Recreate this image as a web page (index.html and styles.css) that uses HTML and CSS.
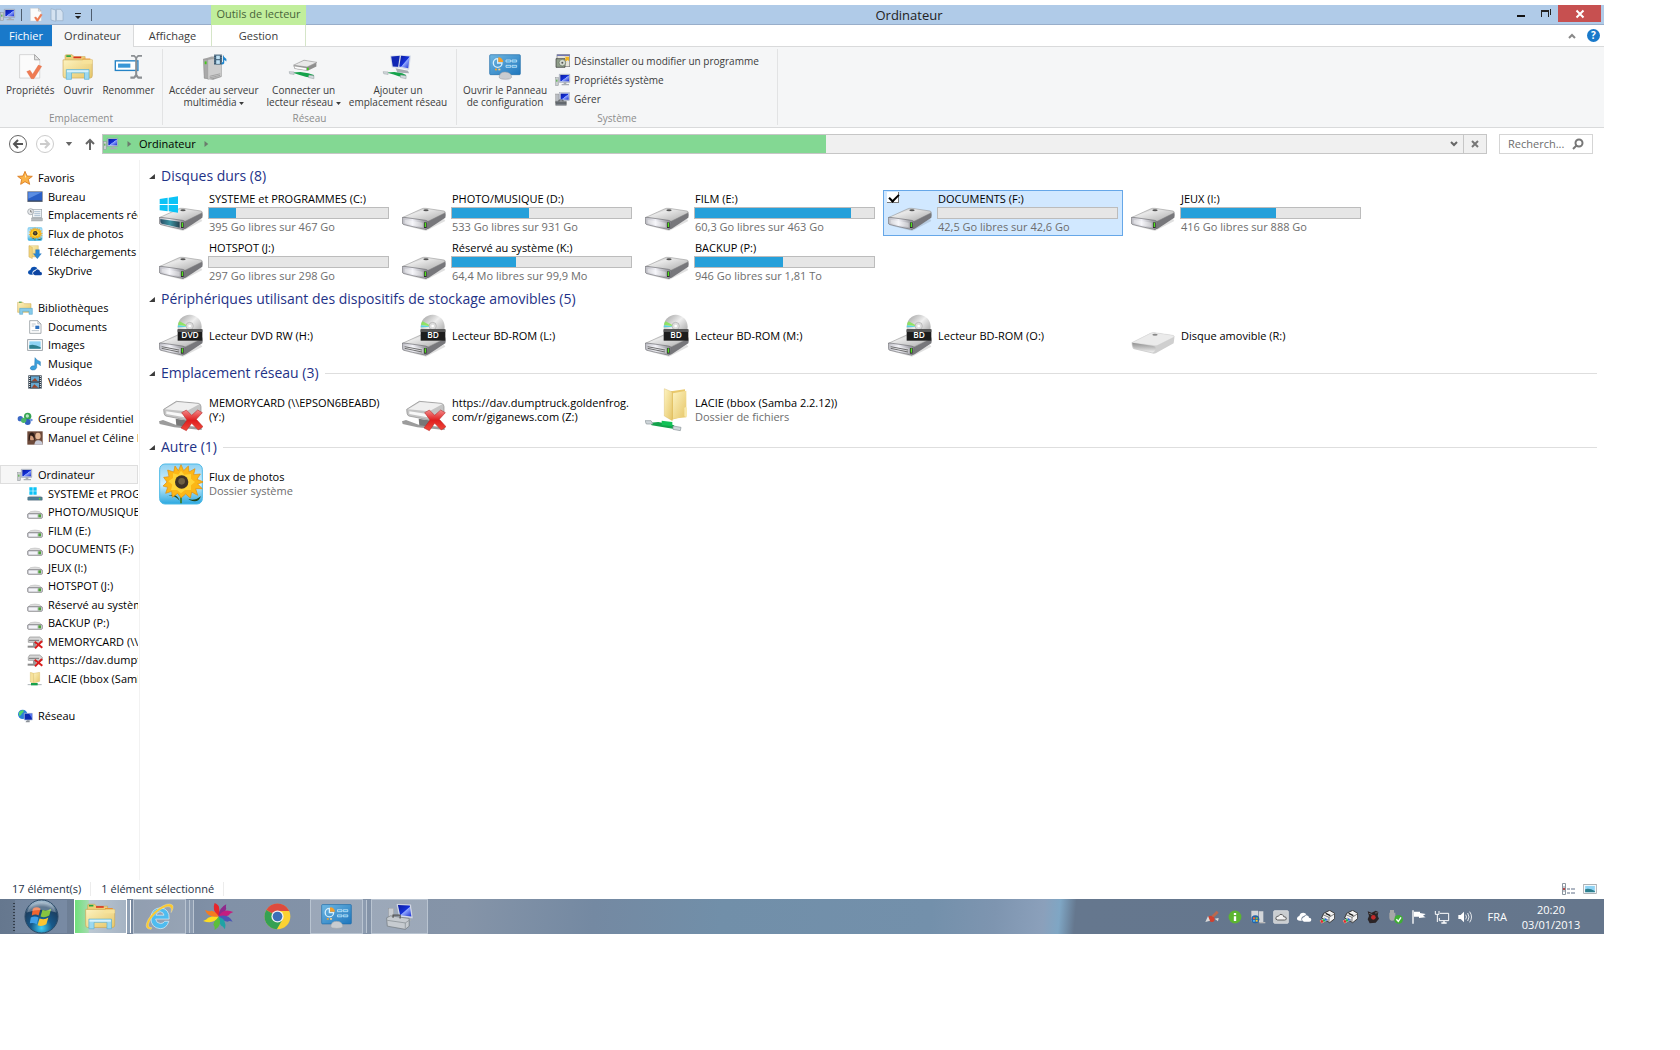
FILE: index.html
```html
<!DOCTYPE html>
<html lang="fr">

<head>
    <meta charset="utf-8">
    <title>Ordinateur</title>
    <link rel="stylesheet" href="styles.css">
</head>

<body>
    <!-- shared icons -->
    <svg class="defs" aria-hidden="true">
        <defs>
            <linearGradient id="gTop" x1="0" y1="0" x2="1" y2="1">
                <stop offset="0" stop-color="#9c9c9c" />
                <stop offset=".35" stop-color="#e9e9e9" />
                <stop offset="1" stop-color="#a9a9a9" />
            </linearGradient>
            <linearGradient id="gFront" x1="0" y1="0" x2="1" y2="0">
                <stop offset="0" stop-color="#b9b9c0" />
                <stop offset=".4" stop-color="#f1f1f7" />
                <stop offset="1" stop-color="#85858b" />
            </linearGradient>
            <linearGradient id="gTeal" x1="0" y1="0" x2="1" y2="0">
                <stop offset="0" stop-color="#2b4f66" />
                <stop offset=".5" stop-color="#3b94a3" />
                <stop offset="1" stop-color="#27424f" />
            </linearGradient>
            <linearGradient id="gFade" x1="0" y1="0" x2="0" y2="1">
                <stop offset="0" stop-color="#8f8f8f" />
                <stop offset="1" stop-color="#efefef" />
            </linearGradient>
            <linearGradient id="gDisc" x1="0" y1="0" x2="1" y2="1">
                <stop offset="0" stop-color="#999" />
                <stop offset=".45" stop-color="#eee" />
                <stop offset="1" stop-color="#8d8d8d" />
            </linearGradient>
            <linearGradient id="gFolder" x1="0" y1="0" x2="1" y2="1">
                <stop offset="0" stop-color="#fdf3c0" />
                <stop offset="1" stop-color="#e6c668" />
            </linearGradient>
            <linearGradient id="gScreen" x1="0" y1="0" x2="1" y2="1">
                <stop offset="0" stop-color="#0a1a9c" />
                <stop offset=".5" stop-color="#1430d8" />
                <stop offset=".55" stop-color="#8fa6ff" />
                <stop offset="1" stop-color="#1a2ed0" />
            </linearGradient>
            <linearGradient id="gPanel" x1="0" y1="0" x2="1" y2="1">
                <stop offset="0" stop-color="#6fb7e2" />
                <stop offset="1" stop-color="#1e76bd" />
            </linearGradient>
            <linearGradient id="gSky" x1="0" y1="0" x2="0" y2="1">
                <stop offset="0" stop-color="#8fd2f3" />
                <stop offset=".5" stop-color="#d3f0fb" />
                <stop offset="1" stop-color="#2ba8e0" />
            </linearGradient>
            <linearGradient id="gCross" x1="0" y1="0" x2="0" y2="1">
                <stop offset="0" stop-color="#f28a8a" />
                <stop offset=".5" stop-color="#e01e1e" />
                <stop offset="1" stop-color="#f04b3c" />
            </linearGradient>
            <radialGradient id="gOrb" cx=".5" cy=".85" r=".8">
                <stop offset="0" stop-color="#3fd0f5" />
                <stop offset=".4" stop-color="#17598a" />
                <stop offset=".8" stop-color="#1c3e60" />
                <stop offset="1" stop-color="#9fb8cc" />
            </radialGradient>
        </defs>

        <symbol id="drive" viewBox="0 0 132 132">
            <path d="M10 104L72 120L130 90L126 84L70 112Z" fill="#000" opacity=".12" />
            <path d="M78 88L130 64Q132 72 130 80L80 113L70 116Z" fill="#77777b" />
            <path d="M1 80L58 54Q64 51 72 52L126 60Q132 62 128 66L80 90Q76 92 70 91L6 82Z" fill="url(#gTop)" stroke="#888" stroke-width="1.5" />
            <path d="M1 82Q0 78 6 79L70 88Q78 89 78 94L76 112Q74 117 68 115L6 101Q2 100 1 96Z" fill="url(#gFront)" stroke="#6e6e72" stroke-width="2" />
            <path d="M8 86L62 95V109L8 97Z" fill="#fff" opacity=".35" />
            <rect x="66" y="94" width="8" height="17" fill="#2e2e2e" />
            <rect x="68" y="95" width="4" height="13" fill="#4fe01c" />
            <ellipse cx="72" cy="58" rx="8" ry="3" fill="#555" />
        </symbol>
        <symbol id="drive-win" viewBox="0 0 132 132">
            <use href="#drive" width="132" height="132" />
            <path d="M4 84L62 92V110L8 98Q3 96 4 84Z" fill="url(#gTeal)" />
            <path d="M2 24L26 20V39H2ZM29 20L57 16V39H29ZM2 42H26V61L2 58ZM29 42H57V65L29 61Z" fill="#0cc3f6" />
        </symbol>
        <symbol id="drive-disc" viewBox="0 0 132 132">
            <use href="#drive" y="8" width="132" height="132" />
            <path d="M8 98L60 108M8 103L60 114" stroke="#555" stroke-width="2.5" fill="none" />
            <circle cx="92" cy="38" r="36" fill="url(#gDisc)" />
            <path d="M92 38L57 32Q58 26 62 22Z" fill="#7fe84a" opacity=".8" />
            <path d="M92 38L57 34L56 40Z" fill="#39d6e0" opacity=".8" />
            <circle cx="92" cy="36" r="11" fill="#ddd" stroke="#aaa" stroke-width="2" />
            <circle cx="92" cy="36" r="4" fill="#fff" />
            <rect x="56" y="46" width="74" height="34" fill="#1d1d1d" />
            <rect x="56" y="46" width="74" height="8" fill="#555" />
        </symbol>
        <symbol id="drive-usb" viewBox="0 0 132 132">
            <path d="M2 86L58 58Q64 55 72 56L126 64Q132 66 130 72L128 88L74 118Q68 120 62 118L10 106Q2 104 2 86Z" fill="#cfcfcf" />
            <path d="M2 86L58 58Q64 55 72 56L126 64Q132 66 128 70L80 94Q76 96 70 95Z" fill="#ebebeb" stroke="#c4c4c4" stroke-width="1" />
            <path d="M4 86L66 96Q78 98 72 110Q68 118 58 114L12 104Q4 100 4 86Z" fill="url(#gFade)" />
            <ellipse cx="72" cy="62" rx="8" ry="3" fill="#888" />
        </symbol>
        <symbol id="drive-off" viewBox="0 0 132 132">
            <path d="M0 100L12 96L50 110L128 118V126L46 118L2 108Z" fill="#9c9c9c" />
            <path d="M14 64L52 40L118 46Q126 48 126 56V76L82 96L20 84Q14 82 14 64Z" fill="#c4c4c4" stroke="#8d8d8d" stroke-width="2" />
            <path d="M18 64L54 42L122 48L82 70Z" fill="#efefef" />
            <path d="M22 70L76 78V88L22 78Z" fill="#f8f8f8" />
            <path d="M50 92L90 98L82 116L52 112Z" fill="#777" />
            <path d="M68 74L82 66L98 82L116 66L130 74L112 94L132 116L118 126L98 106L82 128L66 120L84 96Z" fill="url(#gCross)" stroke="#b32020" stroke-width="1.5" />
        </symbol>
        <symbol id="net-folder" viewBox="0 0 132 132">
            <path d="M78 10L120 4V84L78 96Z" fill="#e9c96c" />
            <path d="M58 2L82 12V98L58 84Z" fill="url(#gFolder)" stroke="#d2ae50" stroke-width="1" />
            <path d="M84 16L124 8V88L84 92Z" fill="url(#gFolder)" />
            <rect x="118" y="58" width="8" height="28" rx="3" fill="#f8e9ab" />
            <path d="M16 104L40 102L60 106L88 112L84 122L56 118L20 112Z" fill="#13a24b" />
            <path d="M50 98L82 102V114L50 112Z" fill="#12c257" />
            <path d="M0 98L18 98L24 108L4 108ZM84 114L108 118L106 128L84 124Z" fill="#cfd6da" stroke="#8a9499" stroke-width="2" />
        </symbol>
        <symbol id="sunflower" viewBox="0 0 132 124">
            <rect x="2" y="2" width="128" height="120" rx="16" fill="url(#gSky)" stroke="#4db9e6" stroke-width="3" />
            <path d="M66 76V120" stroke="#3f7a17" stroke-width="5" />
            <path d="M62 112Q50 84 22 100Q40 90 62 112ZM76 100Q100 120 126 98Q118 122 92 110Z" fill="#22461a" />
            <path d="M66 4L74 22L88 8L90 26L108 16L104 34L124 32L114 48L134 56L116 62L130 76L110 76L116 96L98 86L94 104L80 92L66 104L56 90L40 102L38 84L20 90L26 72L12 68L24 56L14 42L30 40L26 20L44 26L48 8L58 22Z" fill="#fcb716" stroke="#e18a0b" stroke-width="2" />
            <path d="M66 22L76 34L96 32L96 46L108 56L96 66L96 80L78 80L66 90L54 80L36 80L40 64L28 54L42 44L42 30L58 34Z" fill="#ffd437" />
            <circle cx="68" cy="56" r="20" fill="#3d3226" />
            <circle cx="68" cy="54" r="10" fill="#6d6044" />
        </symbol>

        <symbol id="computer" viewBox="0 0 48 42">
            <rect x="2" y="14" width="8" height="24" fill="#c8cccf" stroke="#8e9498" stroke-width="1.5" />
            <rect x="4" y="20" width="3" height="6" fill="#3fae2a" />
            <path d="M13 4H44V28H13Z" fill="#cfd6e6" stroke="#7d8799" stroke-width="1.5" />
            <path d="M16 6H42V25H16Z" fill="url(#gScreen)" />
            <path d="M26 28H34V33H42V37H20V33H26Z" fill="#a8adb3" />
        </symbol>
        <symbol id="doc-check" viewBox="0 0 72 80">
            <path d="M4 2H50L66 18V74H4Z" fill="#fbfbfb" stroke="#c4c4c4" stroke-width="2" />
            <path d="M50 2V18H66Z" fill="#e6e6e6" stroke="#888" stroke-width="2" />
            <path d="M26 54L36 50L44 62L62 34L72 38L48 76L40 76Z" fill="#ef7b52" stroke="#d9623b" stroke-width="1" />
        </symbol>
        <symbol id="folders" viewBox="0 0 96 80">
            <path d="M8 6Q8 2 12 2H30L36 8H70V20H8Z" fill="#efcf79" stroke="#c39f48" stroke-width="1.5" />
            <rect x="12" y="4" width="14" height="5" fill="#21a540" />
            <rect x="34" y="8" width="24" height="5" fill="#d8321f" />
            <rect x="62" y="14" width="24" height="5" fill="#f08c28" />
            <path d="M2 18H92V66Q92 74 86 74H8Q2 74 2 66Z" fill="url(#gFolder)" stroke="#cba653" stroke-width="2" />
            <path d="M58 26L64 18H92V30H58Z" fill="#f7e39b" />
            <path d="M12 48H82V78H68V58H28V78H12Z" fill="#9bd8f0" stroke="#58aed2" stroke-width="2" />
            <path d="M14 50H80V56H14Z" fill="#d7f2fc" />
        </symbol>
        <symbol id="rename" viewBox="0 0 84 76">
            <rect x="2" y="20" width="66" height="28" fill="#fff" stroke="#2583c6" stroke-width="4" />
            <rect x="10" y="28" width="36" height="12" fill="#3795d6" />
            <path d="M48 3H58L63 8L68 3H80V8H70L66 12V60L70 66H80V72H68L63 67L58 72H46V66H56L60 60V12L56 8H48Z" fill="#8b8f93" />
        </symbol>
        <symbol id="server" viewBox="0 0 84 84">
            <path d="M8 16L34 8L66 8V74L42 82L10 78Z" fill="#a7a7a7" />
            <path d="M8 16L40 18V82L10 78Z" fill="#a9a9a9" stroke="#777" />
            <path d="M22 18L66 12V72L22 82Z" fill="#cdcdcd" stroke="#8a8a8a" />
            <path d="M28 72L62 64M28 77L62 69" stroke="#888" stroke-width="2" />
            <rect x="12" y="24" width="6" height="9" fill="#43c918" />
            <rect x="42" y="2" width="26" height="32" fill="#2b4c66" />
            <rect x="49" y="5" width="12" height="12" fill="#bfe1f4" />
            <rect x="49" y="20" width="12" height="12" fill="#bfe1f4" />
            <path d="M45 3V34M65 3V34" stroke="#fff" stroke-width="2" stroke-dasharray="3 3" />
            <path d="M72 4Q74 12 82 16V24Q78 20 75 19V30Q72 36 66 32Q66 26 71 26V4Z" fill="#1e86cf" />
        </symbol>
        <symbol id="net-drive" viewBox="0 0 96 84">
            <path d="M14 38L48 20L88 28V40L60 54L18 48Z" fill="#8f8f8f" />
            <path d="M14 36L48 20L90 27L58 42Z" fill="#e9e9e9" stroke="#999" stroke-width="2" />
            <path d="M16 39L56 45V53L18 47Z" fill="#fff" stroke="#777" stroke-width="1" />
            <rect x="58" y="44" width="5" height="8" fill="#35cf10" />
            <path d="M10 60L36 58L62 62L80 68V76L56 74L34 68Z" fill="#16a34c" />
            <path d="M0 57L16 58V66L2 64ZM64 68L80 70V80L62 76Z" fill="#d3dadd" stroke="#8d979b" stroke-width="1.5" />
        </symbol>
        <symbol id="net-place" viewBox="0 0 96 84">
            <path d="M22 6L58 3L60 46L28 44Z" fill="#d7dde9" />
            <path d="M26 8L56 6L57 42L31 40Z" fill="#1026b4" />
            <path d="M54 3L90 5L84 52L48 44Z" fill="#d7dde9" />
            <path d="M58 6L86 8L81 46L52 40Z" fill="url(#gScreen)" />
            <path d="M40 46L80 54L84 62L46 60Z" fill="#a8adb3" />
            <path d="M10 60L36 58L62 62L74 68V76L50 72L34 66Z" fill="#16a34c" />
            <path d="M0 57L16 58V66L2 64ZM56 68L74 70V80L56 76Z" fill="#d3dadd" stroke="#8d979b" stroke-width="1.5" />
        </symbol>
        <symbol id="panel" viewBox="0 0 96 78">
            <rect x="2" y="2" width="92" height="60" rx="3" fill="url(#gPanel)" stroke="#1e6ba8" stroke-width="2" />
            <path d="M26 14A13 13 0 1 0 39 27H26Z" fill="none" stroke="#d7effc" stroke-width="4" />
            <path d="M28 10A15 15 0 0 1 43 24H28Z" fill="#f5a02c" />
            <path d="M51 18H65V24H51ZM69 18H83V24H69ZM51 34H65V40H51ZM69 34H83V40H69Z" fill="#39a4e2" stroke="#e6f5fd" stroke-width="2" />
            <rect x="18" y="44" width="6" height="5" fill="#f5a02c" />
            <rect x="28" y="44" width="6" height="5" fill="#fbd48e" />
            <path d="M30 70Q32 54 48 54Q66 54 68 70Q66 76 49 76Q32 76 30 70Z" fill="#c9ccd0" stroke="#9a9da1" stroke-width="1.5" />
        </symbol>
        <symbol id="program" viewBox="0 0 48 42">
            <rect x="6" y="2" width="38" height="36" fill="#e7e4da" stroke="#77797c" stroke-width="2" />
            <path d="M6 4H44" stroke="#7176b5" stroke-width="4" />
            <path d="M3 14H30V40H3Z" fill="#8f9d8a" stroke="#333" stroke-width="2" />
            <circle cx="22" cy="26" r="10" fill="#d3d9cf" stroke="#5c6b58" stroke-width="2" />
            <circle cx="22" cy="26" r="3" fill="#555" />
            <path d="M28 8L42 8V22L38 18L34 22L29 17L33 12Z" fill="#f0b51e" />
        </symbol>
        <symbol id="manage" viewBox="0 0 48 42">
            <rect x="2" y="6" width="10" height="26" fill="#b9bdc2" stroke="#777" />
            <rect x="14" y="2" width="30" height="24" fill="#cfd6e6" stroke="#7d8799" />
            <rect x="17" y="5" width="24" height="18" fill="url(#gScreen)" />
            <path d="M2 28H34V40H2Z" fill="#7d858d" stroke="#444" />
            <path d="M12 28V24H24V28M2 33H34" stroke="#333" stroke-width="2" fill="none" />
        </symbol>

        <symbol id="star" viewBox="0 0 48 42">
            <path d="M24 1L30 15L46 16L34 25L38 40L24 32L11 40L14 25L2 16L18 15Z" fill="#fbb347" stroke="#d9771b" stroke-width="2.5" />
            <path d="M24 8L27 18L24 20Z" fill="#fff0c9" />
        </symbol>
        <symbol id="desktop" viewBox="0 0 48 42">
            <rect x="2" y="5" width="44" height="30" fill="#2a5fc6" stroke="#888" stroke-width="2" />
            <path d="M4 7H44L4 26Z" fill="#5b8de2" />
            <path d="M3 33H45" stroke="#3b4450" stroke-width="3" />
        </symbol>
        <symbol id="recent" viewBox="0 0 48 42">
            <rect x="16" y="4" width="28" height="24" fill="#f1f4f6" stroke="#9aa2a8" stroke-width="2" />
            <path d="M22 11H40M22 17H40M22 23H40" stroke="#86a3bd" stroke-width="2" />
            <rect x="14" y="30" width="32" height="9" fill="#b8bcc0" stroke="#85898d" />
            <circle cx="11" cy="11" r="9" fill="#e6e8ea" stroke="#8f979d" stroke-width="2" />
            <path d="M11 6V12H16" stroke="#555" stroke-width="2" fill="none" />
        </symbol>
        <symbol id="download" viewBox="0 0 48 42">
            <path d="M6 2H34V36H6Z" fill="url(#gFolder)" stroke="#c9a549" />
            <path d="M6 2L16 7V41L6 36Z" fill="#f0d27b" stroke="#c9a549" />
            <path d="M26 14H37V26H43L31 41L19 26H26Z" fill="#2787d6" stroke="#1866aa" />
        </symbol>
        <symbol id="cloud" viewBox="0 0 48 42">
            <path d="M12 32Q3 32 3 25Q3 19 10 18Q12 8 22 8Q28 8 31 13L24 18Q16 20 16 26Q16 30 18 32Z" fill="#0b4fae" />
            <path d="M24 34Q18 33 18 28Q18 22 25 21Q28 14 35 17Q39 19 39 23Q45 23 45 29Q45 34 40 34Z" fill="#0e45a2" />
        </symbol>
        <symbol id="library" viewBox="0 0 48 42">
            <path d="M2 4H18L22 8H42V34H2Z" fill="url(#gFolder)" stroke="#c9a549" stroke-width="1.5" />
            <rect x="6" y="2" width="8" height="3" fill="#3a9f42" />
            <path d="M8 22H46V40H36V31H17V40H8Z" fill="#87cbea" stroke="#4b9fc8" stroke-width="1.5" />
        </symbol>
        <symbol id="document" viewBox="0 0 48 42">
            <path d="M8 2H32L42 12V40H8Z" fill="#fff" stroke="#7f868c" stroke-width="2" />
            <path d="M32 2V12H42Z" fill="#dde2e6" stroke="#7f868c" />
            <path d="M14 12H26M14 18H22M14 32H36" stroke="#9ba7b1" stroke-width="2" />
            <rect x="25" y="17" width="12" height="10" fill="#2f72c0" />
        </symbol>
        <symbol id="picture" viewBox="0 0 48 42">
            <rect x="2" y="5" width="44" height="32" fill="#fff" stroke="#8c9399" stroke-width="2.5" />
            <rect x="7" y="10" width="34" height="22" fill="#8fd3f4" />
            <path d="M7 22Q20 16 41 28V32H7Z" fill="#2d7f8e" />
        </symbol>
        <symbol id="music" viewBox="0 0 48 42">
            <path d="M24 2Q28 10 40 14V26Q36 20 29 19V32Q26 41 15 39Q6 36 12 29Q17 25 23 27Z" fill="#3aa0dd" stroke="#2073ad" stroke-width="1.5" />
        </symbol>
        <symbol id="video" viewBox="0 0 48 42">
            <rect x="4" y="1" width="40" height="40" fill="#2e3c4a" />
            <rect x="12" y="4" width="24" height="15" fill="#66a7cf" />
            <rect x="12" y="23" width="24" height="15" fill="#66a7cf" />
            <path d="M14 19L24 9L32 19ZM14 38L22 28L34 38Z" fill="#98462e" />
            <path d="M8 3V40M40 3V40" stroke="#fff" stroke-width="3" stroke-dasharray="3 3" />
        </symbol>
        <symbol id="homegroup" viewBox="0 0 48 42">
            <circle cx="10" cy="20" r="8" fill="#3b69c5" />
            <circle cx="32" cy="13" r="11" fill="#35a452" />
            <circle cx="32" cy="30" r="9" fill="#2f5fc0" />
            <circle cx="20" cy="25" r="8" fill="#4ab56a" />
            <circle cx="31" cy="12" r="5" fill="#b7e6c2" />
            <circle cx="43" cy="24" r="4" fill="#6f94dd" />
        </symbol>
        <symbol id="avatar" viewBox="0 0 48 42">
            <rect x="1" y="1" width="46" height="40" fill="#6d4a3a" />
            <ellipse cx="15" cy="18" rx="8" ry="10" fill="#d39c7b" />
            <path d="M5 20Q6 2 18 5Q27 10 22 32Q20 12 10 14Q9 30 5 30Z" fill="#2e1c16" />
            <ellipse cx="33" cy="15" rx="8" ry="10" fill="#e5b795" />
            <path d="M22 41Q24 27 34 28Q46 28 47 41Z" fill="#c9ccd9" />
        </symbol>
        <symbol id="small-win" viewBox="0 0 48 42">
            <path d="M7 1H17V11H7ZM19 1H29V11H19ZM7 13H17V23H7ZM19 13H29V23H19Z" fill="#0cc3f6" />
            <path d="M8 26H40L46 32H2Z" fill="#c9cdd0" />
            <rect x="2" y="30" width="44" height="10" rx="2" fill="#4d7f97" stroke="#55606a" />
            <rect x="36" y="33" width="4" height="4" fill="#59d82c" />
        </symbol>
        <symbol id="small-drive" viewBox="0 0 48 42">
            <path d="M10 20Q24 16 38 20L46 28H2Z" fill="#ddd" stroke="#999" />
            <rect x="2" y="26" width="44" height="14" rx="3" fill="#d6d6dc" stroke="#6b6b70" stroke-width="2" />
            <rect x="6" y="29" width="24" height="8" fill="#f3f3f8" />
            <rect x="34" y="28" width="8" height="9" fill="#4ea13a" />
        </symbol>
        <symbol id="small-off" viewBox="0 0 48 42">
            <path d="M8 6H38L46 13V22H4V13Z" fill="#d6d6d6" stroke="#8b8b8b" stroke-width="2" />
            <path d="M6 16H36" stroke="#777" stroke-width="3" />
            <path d="M2 32H26V38H2Z" fill="#8a8a8a" />
            <path d="M18 22H28V34H18Z" fill="#999" />
            <path d="M23 20L46 38M45 18L24 40" stroke="#d81c1c" stroke-width="6" />
        </symbol>
        <symbol id="small-folder" viewBox="0 0 48 42">
            <path d="M10 1L20 4V34L10 30Z" fill="#f6e19a" stroke="#ccab50" />
            <path d="M20 4L38 1V28L20 34Z" fill="url(#gFolder)" stroke="#d2ae50" />
            <path d="M2 38H44" stroke="#aab2b6" stroke-width="3" />
            <path d="M12 33H32V40H12Z" fill="#17a04c" />
        </symbol>
        <symbol id="network" viewBox="0 0 48 42">
            <circle cx="17" cy="16" r="14" fill="#2b7fd8" />
            <path d="M6 10Q12 2 20 4Q22 10 14 14Q12 22 6 20Z" fill="#4fd66a" />
            <path d="M22 13H46V33H22Z" fill="#0d2ab0" stroke="#b6c2dc" stroke-width="2" />
            <path d="M36 14L45 14V28Z" fill="#5777f0" />
            <path d="M30 34H38V40H26V38Z" fill="#8a9097" />
        </symbol>
        <symbol id="tri-right" viewBox="0 0 8 10">
            <path d="M2 1L7 5L2 9Z" fill="#6b7b6d" />
        </symbol>
        <symbol id="tri-down" viewBox="0 0 8 5">
            <path d="M0 0H8L4 5Z" fill="currentColor" />
        </symbol>
        <symbol id="tri-open" viewBox="0 0 7 6">
            <path d="M7 0V6H0Z" fill="#3a3a3a" />
        </symbol>

        <symbol id="printer" viewBox="0 0 48 42">
            <path d="M14 10L32 1L47 10V26L32 38L8 24Z" fill="#f2f2f2" stroke="#222" stroke-width="2.5" />
            <path d="M12 14L30 22L46 12M30 22V36" fill="none" stroke="#444" stroke-width="2" />
            <path d="M20 10L34 17" stroke="#222" stroke-width="4" />
            <path d="M1 32L16 24L28 30L8 41Z" fill="#fff" stroke="#222" stroke-width="1" />
            <path d="M3 32L10 29L14 36L8 40Z" fill="#e02b2b" />
            <path d="M10 29L16 26L20 33L14 36Z" fill="#22b14c" />
            <path d="M16 26L19 25L26 30L20 33Z" fill="#2b63e0" />
        </symbol>
    </svg>

    <div class="window">
        <header class="titlebar">
            <div class="quickAccess">
                <svg class="icon16"><use href="#computer" /></svg>
                <span class="quickSep"></span>
                <button class="quickButton" aria-label="Propriétés"><svg class="icon16"><use href="#doc-check" /></svg></button>
                <button class="quickButton" aria-label="Nouveau dossier">
                    <svg class="icon16" viewBox="0 0 48 42">
                        <path d="M6 2L20 6V40L6 36ZM22 4H36L42 14V38H22Z" fill="#d4e2f1" stroke="#96acc4" stroke-width="2" />
                    </svg>
                </button>
                <button class="quickButton" aria-label="Personnaliser">
                    <svg class="icon16" viewBox="0 0 16 14">
                        <path d="M5 5H11V6H5ZM5 8H11L8 11Z" fill="#222" />
                    </svg>
                </button>
                <span class="quickSep"></span>
            </div>
            <div class="contextTitle">Outils de lecteur</div>
            <h1 class="windowTitle">Ordinateur</h1>
            <div class="windowButtons">
                <button class="winButton" aria-label="Réduire"><svg viewBox="0 0 10 10"><path d="M1 6H9V8H1Z" fill="#111" /></svg></button>
                <button class="winButton" aria-label="Restaurer"><svg viewBox="0 0 10 10"><path d="M0 1H8V8H7V3H1V8H0ZM9 0H10V6H9Z" fill="#222" /></svg></button>
                <button class="winButton closeButton" aria-label="Fermer"><svg viewBox="0 0 10 10"><path d="M1.500 1.500L8.500 8.500M8.500 1.500L1.500 8.500" stroke="#fff" stroke-width="2" /></svg></button>
            </div>
        </header>

        <nav class="tabs">
            <button class="tab fileTab">Fichier</button>
            <button class="tab activeTab">Ordinateur</button>
            <button class="tab viewTab">Affichage</button>
            <button class="tab manageTab">Gestion</button>
            <div class="tabTools">
                <button class="plainButton" aria-label="Réduire le ruban"><svg class="chevron" viewBox="0 0 8 6"><path d="M1 5L4 2L7 5" fill="none" stroke="#888" stroke-width="2" /></svg></button>
                <button class="helpButton" aria-label="Aide">?</button>
            </div>
        </nav>

        <section class="ribbon">
            <div class="ribbonGroup placeGroup">
                <div class="ribbonButtons">
                    <button class="bigButton"><svg class="bigIcon"><use href="#doc-check" /></svg><span>Propriétés</span></button>
                    <button class="bigButton"><svg class="bigIcon"><use href="#folders" /></svg><span>Ouvrir</span></button>
                    <button class="bigButton"><svg class="bigIcon"><use href="#rename" /></svg><span>Renommer</span></button>
                </div>
                <div class="groupLabel">Emplacement</div>
            </div>
            <div class="ribbonGroup networkGroup">
                <div class="ribbonButtons">
                    <button class="bigButton"><svg class="bigIcon"><use href="#server" /></svg><span>Accéder au serveur<br>multimédia <svg class="caret"><use href="#tri-down" /></svg></span></button>
                    <button class="bigButton"><svg class="bigIcon"><use href="#net-drive" /></svg><span>Connecter un<br>lecteur réseau <svg class="caret"><use href="#tri-down" /></svg></span></button>
                    <button class="bigButton"><svg class="bigIcon"><use href="#net-place" /></svg><span>Ajouter un<br>emplacement réseau</span></button>
                </div>
                <div class="groupLabel">Réseau</div>
            </div>
            <div class="ribbonGroup systemGroup">
                <div class="ribbonButtons">
                    <button class="bigButton"><svg class="bigIcon"><use href="#panel" /></svg><span>Ouvrir le Panneau<br>de configuration</span></button>
                    <div class="smallButtons">
                        <button class="smallButton"><svg class="icon16"><use href="#program" /></svg>Désinstaller ou modifier un programme</button>
                        <button class="smallButton"><svg class="icon16"><use href="#computer" /></svg>Propriétés système</button>
                        <button class="smallButton"><svg class="icon16"><use href="#manage" /></svg>Gérer</button>
                    </div>
                </div>
                <div class="groupLabel">Système</div>
            </div>
        </section>

        <div class="navRow">
            <button class="plainButton" aria-label="Précédent">
                <svg class="navIcon" viewBox="0 0 20 20">
                    <circle cx="10" cy="10" r="8.500" fill="none" stroke="#666" />
                    <path d="M15 10H6M10 6L6 10L10 14" fill="none" stroke="#555" stroke-width="2" />
                </svg>
            </button>
            <button class="plainButton" aria-label="Suivant">
                <svg class="navIcon" viewBox="0 0 20 20">
                    <circle cx="10" cy="10" r="8.500" fill="none" stroke="#ccc" />
                    <path d="M5 10H14M10 6L14 10L10 14" fill="none" stroke="#ccc" stroke-width="2" />
                </svg>
            </button>
            <button class="plainButton historyButton" aria-label="Pages récentes"><svg class="caretBig"><use href="#tri-down" /></svg></button>
            <button class="plainButton" aria-label="Dossier parent">
                <svg class="upIcon" viewBox="0 0 10 12"><path d="M5 12V2M1 6L5 2L9 6" fill="none" stroke="#666" stroke-width="2" /></svg>
            </button>
            <div class="addressBar">
                <div class="crumbs">
                    <svg class="icon16"><use href="#computer" /></svg>
                    <svg class="crumbArrow"><use href="#tri-right" /></svg>
                    <button class="crumb">Ordinateur</button>
                    <svg class="crumbArrow"><use href="#tri-right" /></svg>
                </div>
                <button class="plainButton addressButton" aria-label="Emplacements précédents"><svg class="chevron" viewBox="0 0 8 6"><path d="M1 1L4 4L7 1" fill="none" stroke="#666" stroke-width="2" /></svg></button>
                <button class="plainButton addressButton stopButton" aria-label="Arrêter"><svg class="chevron" viewBox="0 0 8 8"><path d="M1 1L7 7M7 1L1 7" stroke="#777" stroke-width="2" /></svg></button>
            </div>
            <div class="searchBox">
                <input type="text" class="searchInput" placeholder="Recherch..." aria-label="Rechercher">
                <svg class="searchIcon" viewBox="0 0 12 12">
                    <circle cx="7" cy="5" r="3.500" fill="none" stroke="#777" stroke-width="2" />
                    <path d="M5 7L1 11" stroke="#777" stroke-width="2" />
                </svg>
            </div>
        </div>

        <div class="content">
            <aside class="tree">
                <div class="treeHead"><svg class="icon16"><use href="#star" /></svg>Favoris</div>
                <ul>
                    <li><svg class="icon16"><use href="#desktop" /></svg>Bureau</li>
                    <li><svg class="icon16"><use href="#recent" /></svg>Emplacements récents</li>
                    <li><svg class="icon16"><use href="#sunflower" /></svg>Flux de photos</li>
                    <li><svg class="icon16"><use href="#download" /></svg>Téléchargements</li>
                    <li><svg class="icon16"><use href="#cloud" /></svg>SkyDrive</li>
                </ul>
                <div class="treeHead"><svg class="icon16"><use href="#library" /></svg>Bibliothèques</div>
                <ul>
                    <li><svg class="icon16"><use href="#document" /></svg>Documents</li>
                    <li><svg class="icon16"><use href="#picture" /></svg>Images</li>
                    <li><svg class="icon16"><use href="#music" /></svg>Musique</li>
                    <li><svg class="icon16"><use href="#video" /></svg>Vidéos</li>
                </ul>
                <div class="treeHead"><svg class="icon16"><use href="#homegroup" /></svg>Groupe résidentiel</div>
                <ul>
                    <li><svg class="icon16"><use href="#avatar" /></svg>Manuel et Céline L</li>
                </ul>
                <div class="treeHead currentHead"><svg class="icon16"><use href="#computer" /></svg>Ordinateur</div>
                <ul>
                    <li><svg class="icon16"><use href="#small-win" /></svg>SYSTEME et PROGRAMMES</li>
                    <li><svg class="icon16"><use href="#small-drive" /></svg>PHOTO/MUSIQUE (D:)</li>
                    <li><svg class="icon16"><use href="#small-drive" /></svg>FILM (E:)</li>
                    <li><svg class="icon16"><use href="#small-drive" /></svg>DOCUMENTS (F:)</li>
                    <li><svg class="icon16"><use href="#small-drive" /></svg>JEUX (I:)</li>
                    <li><svg class="icon16"><use href="#small-drive" /></svg>HOTSPOT (J:)</li>
                    <li><svg class="icon16"><use href="#small-drive" /></svg>Réservé au système (K:)</li>
                    <li><svg class="icon16"><use href="#small-drive" /></svg>BACKUP (P:)</li>
                    <li><svg class="icon16"><use href="#small-off" /></svg>MEMORYCARD (\\EPSON6BEABD)</li>
                    <li><svg class="icon16"><use href="#small-off" /></svg>https://dav.dumptruck.goldenfrog.com</li>
                    <li><svg class="icon16"><use href="#small-folder" /></svg>LACIE (bbox (Samba 2.2.12))</li>
                </ul>
                <div class="treeHead"><svg class="icon16"><use href="#network" /></svg>Réseau</div>
            </aside>

            <main class="files">
                <h2 class="section"><svg class="openMark"><use href="#tri-open" /></svg>Disques durs (8)</h2>
                <div class="tiles">
                    <div class="tile">
                        <svg class="tileIcon"><use href="#drive-win" /></svg>
                        <div class="tileText">
                            <div class="name">SYSTEME et PROGRAMMES (C:)</div>
                            <div class="bar"><div class="used" style="width: 15%"></div></div>
                            <div class="info">395 Go libres sur 467 Go</div>
                        </div>
                    </div>
                    <div class="tile">
                        <svg class="tileIcon"><use href="#drive" /></svg>
                        <div class="tileText">
                            <div class="name">PHOTO/MUSIQUE (D:)</div>
                            <div class="bar"><div class="used" style="width: 43%"></div></div>
                            <div class="info">533 Go libres sur 931 Go</div>
                        </div>
                    </div>
                    <div class="tile">
                        <svg class="tileIcon"><use href="#drive" /></svg>
                        <div class="tileText">
                            <div class="name">FILM (E:)</div>
                            <div class="bar"><div class="used" style="width: 87%"></div></div>
                            <div class="info">60,3 Go libres sur 463 Go</div>
                        </div>
                    </div>
                    <div class="tile selected">
                        <input type="checkbox" class="tileCheck" aria-label="DOCUMENTS (F:)" checked>
                        <svg class="tileIcon"><use href="#drive" /></svg>
                        <div class="tileText">
                            <div class="name">DOCUMENTS (F:)</div>
                            <div class="bar"><div class="used" style="width: 0%"></div></div>
                            <div class="info">42,5 Go libres sur 42,6 Go</div>
                        </div>
                    </div>
                    <div class="tile">
                        <svg class="tileIcon"><use href="#drive" /></svg>
                        <div class="tileText">
                            <div class="name">JEUX (I:)</div>
                            <div class="bar"><div class="used" style="width: 53%"></div></div>
                            <div class="info">416 Go libres sur 888 Go</div>
                        </div>
                    </div>
                    <div class="tile">
                        <svg class="tileIcon"><use href="#drive" /></svg>
                        <div class="tileText">
                            <div class="name">HOTSPOT (J:)</div>
                            <div class="bar"><div class="used" style="width: 0%"></div></div>
                            <div class="info">297 Go libres sur 298 Go</div>
                        </div>
                    </div>
                    <div class="tile">
                        <svg class="tileIcon"><use href="#drive" /></svg>
                        <div class="tileText">
                            <div class="name">Réservé au système (K:)</div>
                            <div class="bar"><div class="used" style="width: 36%"></div></div>
                            <div class="info">64,4 Mo libres sur 99,9 Mo</div>
                        </div>
                    </div>
                    <div class="tile">
                        <svg class="tileIcon"><use href="#drive" /></svg>
                        <div class="tileText">
                            <div class="name">BACKUP (P:)</div>
                            <div class="bar"><div class="used" style="width: 49%"></div></div>
                            <div class="info">946 Go libres sur 1,81 To</div>
                        </div>
                    </div>
                </div>

                <h2 class="section"><svg class="openMark"><use href="#tri-open" /></svg>Périphériques utilisant des dispositifs de stockage amovibles (5)</h2>
                <div class="tiles">
                    <div class="tile">
                        <svg class="tileIcon" viewBox="0 0 132 132"><use href="#drive-disc" /><text class="discText" x="93" y="73">DVD</text></svg>
                        <div class="tileText"><div class="name">Lecteur DVD RW (H:)</div></div>
                    </div>
                    <div class="tile">
                        <svg class="tileIcon" viewBox="0 0 132 132"><use href="#drive-disc" /><text class="discText" x="93" y="73">BD</text></svg>
                        <div class="tileText"><div class="name">Lecteur BD-ROM (L:)</div></div>
                    </div>
                    <div class="tile">
                        <svg class="tileIcon" viewBox="0 0 132 132"><use href="#drive-disc" /><text class="discText" x="93" y="73">BD</text></svg>
                        <div class="tileText"><div class="name">Lecteur BD-ROM (M:)</div></div>
                    </div>
                    <div class="tile">
                        <svg class="tileIcon" viewBox="0 0 132 132"><use href="#drive-disc" /><text class="discText" x="93" y="73">BD</text></svg>
                        <div class="tileText"><div class="name">Lecteur BD-ROM (O:)</div></div>
                    </div>
                    <div class="tile">
                        <svg class="tileIcon"><use href="#drive-usb" /></svg>
                        <div class="tileText"><div class="name">Disque amovible (R:)</div></div>
                    </div>
                </div>

                <h2 class="section lined"><svg class="openMark"><use href="#tri-open" /></svg>Emplacement réseau (3)</h2>
                <div class="tiles">
                    <div class="tile">
                        <svg class="tileIcon"><use href="#drive-off" /></svg>
                        <div class="tileText"><div class="name">MEMORYCARD (\\EPSON6BEABD)<br>(Y:)</div></div>
                    </div>
                    <div class="tile">
                        <svg class="tileIcon"><use href="#drive-off" /></svg>
                        <div class="tileText"><div class="name">https://dav.dumptruck.goldenfrog.<br>com/r/giganews.com (Z:)</div></div>
                    </div>
                    <div class="tile">
                        <svg class="tileIcon"><use href="#net-folder" /></svg>
                        <div class="tileText">
                            <div class="name">LACIE (bbox (Samba 2.2.12))</div>
                            <div class="info">Dossier de fichiers</div>
                        </div>
                    </div>
                </div>

                <h2 class="section lined"><svg class="openMark"><use href="#tri-open" /></svg>Autre (1)</h2>
                <div class="tiles">
                    <div class="tile">
                        <svg class="tileIcon"><use href="#sunflower" /></svg>
                        <div class="tileText">
                            <div class="name">Flux de photos</div>
                            <div class="info">Dossier système</div>
                        </div>
                    </div>
                </div>
            </main>
        </div>

        <footer class="statusBar">
            <span class="statusItem">17 élément(s)</span>
            <span class="statusItem">1 élément sélectionné</span>
            <div class="viewButtons">
                <button class="plainButton" aria-label="Détails">
                    <svg class="icon14" viewBox="0 0 14 12">
                        <path d="M1.500 .500H4.500V11.500H1.500ZM1.500 4H4.500M1.500 8H4.500" fill="#fff" stroke="#8c96a0" />
                        <path d="M6 6H9M6 10H9M10 6H14M10 10H14" stroke="#5f6f86" />
                        <path d="M2 5H4V7H2Z" fill="#b54a4a" />
                    </svg>
                </button>
                <button class="plainButton" aria-label="Grandes icônes"><svg class="icon14"><use href="#picture" /></svg></button>
            </div>
        </footer>
    </div>

    <div class="taskbar">
        <div class="grip"></div>
        <button class="startButton" aria-label="Démarrer">
            <svg class="orb" viewBox="0 0 36 36">
                <circle cx="18" cy="18" r="17" fill="url(#gOrb)" stroke="#2c4a66" />
                <path d="M9 10Q13 7 17 10L15 17Q12 15 8 17Z" fill="#f0652f" />
                <path d="M19 11Q23 13 28 10L26 17Q21 20 17 18Z" fill="#86c440" />
                <path d="M7 19Q11 17 15 19L13 26Q10 24 6 25Z" fill="#3f9fe8" />
                <path d="M16 20Q21 22 25 19L23 26Q18 29 14 27Z" fill="#fbc531" />
                <path d="M3 14Q6 3 18 3Q30 3 33 14Q18 8 3 14Z" fill="#fff" opacity=".3" />
            </svg>
        </button>
        <button class="task progressTask" aria-label="Explorateur"><svg class="taskIcon"><use href="#folders" /></svg></button>
        <button class="task openTask doubleTask" aria-label="Internet Explorer">
            <svg class="taskIcon" viewBox="0 0 96 84">
                <path d="M78 50H36Q38 63 51 64Q60 64 64 57H77Q70 80 50 80Q21 77 21 46Q23 16 51 15Q80 18 78 50ZM37 38H62Q60 28 50 27Q40 28 37 38Z" fill="#4fbcf0" stroke="#e6f6fd" stroke-width="2" />
                <path d="M22 82Q2 82 8 62Q16 38 44 18Q74 -4 88 6Q94 14 84 30Q88 16 80 12Q68 8 44 26Q18 48 14 66Q12 78 24 76Z" fill="#fbc92c" stroke="#fff3c4" stroke-width="1" />
            </svg>
        </button>
        <button class="task" aria-label="Photos">
            <svg class="taskIcon" viewBox="0 0 96 84">
                <path d="M48 42Q26 22 36 0Q50 6 50 16Q54 28 48 42Z" fill="#e8262a" />
                <path d="M48 42Q48 16 72 4Q70 14 72 18Q68 34 48 42Z" fill="#8e2a8c" />
                <path d="M48 42Q62 14 94 28Q82 32 80 38Q64 46 48 42Z" fill="#c41d7f" />
                <path d="M48 42Q78 32 92 58Q82 54 76 58Q58 56 48 42Z" fill="#4b56b5" />
                <path d="M48 42Q76 52 68 82Q62 72 56 70Q46 58 48 42Z" fill="#1fa2a5" />
                <path d="M48 42Q62 70 36 84Q38 74 32 68Q36 50 48 42Z" fill="#5bbf3a" />
                <path d="M48 42Q34 68 0 56Q12 52 16 46Q32 38 48 42Z" fill="#fddc21" />
                <path d="M48 42Q16 48 6 22Q18 28 26 24Q42 28 48 42Z" fill="#f47b20" />
            </svg>
        </button>
        <button class="task" aria-label="Chrome">
            <svg class="taskIcon" viewBox="0 0 96 84">
                <circle cx="48" cy="42" r="40" fill="#fbd233" />
                <path d="M48 42L13 22A40 40 0 0 1 83 22L84 25H48Z" fill="#dd4b3e" />
                <path d="M48 42L13 22A40 40 0 0 0 46 82L63 52Z" fill="#35a152" />
                <circle cx="48" cy="42" r="19" fill="#f4f4f4" />
                <circle cx="48" cy="42" r="15" fill="#3b6fb8" />
            </svg>
        </button>
        <button class="task openTask" aria-label="Panneau de configuration"><svg class="taskIcon"><use href="#panel" /></svg></button>
        <button class="task openTask deviceTask" aria-label="Gestion de l'ordinateur">
            <svg class="taskIcon" viewBox="0 0 96 84">
                <path d="M38 2L84 4L90 48L46 44Z" fill="#d5dbe8" stroke="#8a93a6" />
                <path d="M43 6L80 8L85 42L50 38Z" fill="url(#gScreen)" />
                <path d="M54 46H80L84 56H54Z" fill="#a8adb3" />
                <rect x="14" y="16" width="16" height="36" fill="#c9cdd2" stroke="#888" />
                <path d="M8 46L20 40L78 48V72L66 82L10 72Z" fill="#c6cbd0" stroke="#6c7378" stroke-width="2" />
                <path d="M10 54L66 62L78 54M66 62V80" fill="none" stroke="#7d858a" stroke-width="2" />
                <path d="M28 46V38H50V48" fill="none" stroke="#555" stroke-width="4" />
            </svg>
        </button>

        <div class="tray">
            <svg class="icon16" viewBox="0 0 48 42">
                <path d="M12 20Q22 14 30 22Q36 32 26 36Q14 38 12 20Z" fill="#d0402f" />
                <path d="M22 18L38 2L44 8L30 22Z" fill="#b9694f" />
                <path d="M4 36L12 18L18 32ZM32 26L44 24L42 34Z" fill="#d9d9d9" />
            </svg>
            <svg class="icon16" viewBox="0 0 48 48">
                <circle cx="24" cy="24" r="22" fill="#5cb531" />
                <path d="M20 10H28V17H20ZM20 21H28V38H20Z" fill="#fff" />
            </svg>
            <svg class="icon16" viewBox="0 0 48 42">
                <path d="M4 2H24V34H4ZM26 4H40V36H26Z" fill="#d3d6d9" />
                <path d="M28 36H46V40H28Z" fill="#bbb" />
                <circle cx="16" cy="28" r="12" fill="#2463a8" />
                <path d="M9 22H15V28H9Z" fill="#f0652f" />
                <path d="M17 22H23V28H17Z" fill="#86c440" />
                <path d="M9 30H15V35H9Z" fill="#4fb0ee" />
                <path d="M17 30H23V35H17Z" fill="#fbc531" />
            </svg>
            <svg class="icon16" viewBox="0 0 48 42">
                <rect x="2" y="2" width="44" height="38" rx="3" fill="#c9cdd0" stroke="#eee" stroke-width="2" />
                <path d="M14 30Q6 29 9 22Q12 18 16 19Q20 10 28 14Q31 16 32 20Q41 20 40 27Q38 31 34 30Z" fill="#f2f2f2" stroke="#444" stroke-width="2.5" />
            </svg>
            <svg class="icon16" viewBox="0 0 48 42">
                <path d="M12 32Q2 32 3 25Q4 19 10 18Q12 8 22 8Q28 8 31 13L24 18Q16 20 16 26Q16 30 18 32Z" fill="#fff" />
                <path d="M24 35Q18 34 18 28Q18 22 25 21Q28 14 35 17Q39 19 39 23Q46 23 46 29Q46 35 40 35Z" fill="#fff" />
            </svg>
            <svg class="icon16"><use href="#printer" /></svg>
            <svg class="icon16"><use href="#printer" /></svg>
            <svg class="icon16" viewBox="0 0 48 42">
                <path d="M8 4L20 8L32 2L40 6L38 18L42 26L32 38L14 40L8 28L12 18Z" fill="#2b2426" />
                <circle cx="25" cy="22" r="7" fill="#c22b2b" />
                <path d="M12 10L22 14M30 9L38 8" stroke="#8b8b8b" stroke-width="2" />
            </svg>
            <svg class="icon16" viewBox="0 0 48 42">
                <path d="M6 0H18V8H22V26Q20 32 14 32H10Q4 30 4 24V8H6Z" fill="#a7a7a7" />
                <circle cx="32" cy="28" r="13" fill="#3fae34" />
                <path d="M25 28L31 34L39 22" stroke="#fff" stroke-width="4" fill="none" />
            </svg>
            <svg class="icon16" viewBox="0 0 48 42">
                <path d="M6 1V41" stroke="#fff" stroke-width="4" />
                <path d="M9 5H27V9L44 12L36 17L44 22L24 24V20H9Z" fill="#fff" />
            </svg>
            <svg class="icon16" viewBox="0 0 48 42">
                <path d="M18 10H44V32H16V24" fill="none" stroke="#fff" stroke-width="3" />
                <path d="M22 39H38M30 32V38" stroke="#fff" stroke-width="4" />
                <path d="M4 3V13H15V3M10 13V36" fill="none" stroke="#fff" stroke-width="3" />
            </svg>
            <svg class="icon16" viewBox="0 0 48 42">
                <path d="M4 15H11L21 5V37L11 27H4Z" fill="#fff" />
                <path d="M26 14Q31 21 26 28M32 9Q40 21 32 33M38 5Q49 21 38 37" fill="none" stroke="#fff" stroke-width="2.500" />
            </svg>
        </div>
        <button class="language">FRA</button>
        <div class="clock">20:20<br>03/01/2013</div>
    </div>
</body>

</html>
```
FILE: styles.css
```css
* {
    box-sizing: border-box;
}

body {
    display: flex;
    flex-direction: column;
    min-height: 100vh;
    margin: 0;
    padding: 5px 76px 116px 0;
    background-color: #fff;
    color: #000;
    font-family: "Open Sans", "Noto Sans", sans-serif;
    font-size: 11px;
    line-height: 14px;
}

button,
input {
    margin: 0;
    padding: 0;
    border: 0;
    background: none;
    color: inherit;
    font: inherit;
}

svg {
    display: block;
    flex-shrink: 0;
}

ul,
h1,
h2 {
    margin: 0;
    padding: 0;
    font-weight: normal;
    list-style: none;
}

.defs {
    position: absolute;
    width: 0;
    height: 0;
}

.icon16 {
    width: 16px;
    height: 14px;
}

.icon14 {
    width: 14px;
    height: 12px;
}

.window {
    display: flex;
    flex-direction: column;
    flex: 1;
}

/* title bar */
.titlebar {
    display: flex;
    height: 20px;
    background-color: #b0cbe8;
    border-bottom: 1px solid #98aeca;
}

.quickAccess {
    display: flex;
    align-items: center;
    gap: 5px;
    width: 211px;
}

.quickSep {
    width: 1px;
    height: 12px;
    margin-right: 1px;
    background-color: #4f5d6e;
}

.contextTitle {
    width: 95px;
    height: 20px;
    background-color: #c1ee9c;
    color: #48643a;
    line-height: 18px;
    text-align: center;
}

.windowTitle {
    flex: 1;
    padding-left: 4px;
    color: #222;
    font-size: 13px;
    line-height: 20px;
    text-align: center;
}

.windowButtons {
    display: flex;
    padding-right: 3px;
}

.winButton {
    display: flex;
    align-items: center;
    justify-content: center;
    width: 25px;
    height: 17px;
}

.winButton svg {
    width: 10px;
    height: 10px;
}

.closeButton {
    width: 43px;
    background-color: #c75050;
}

/* tabs */
.tabs {
    display: flex;
    height: 22px;
    border-bottom: 1px solid #d9dadb;
}

.tab {
    height: 21px;
    color: #3b3b3b;
}

.fileTab {
    width: 52px;
    background-color: #1979ca;
    color: #fff;
}

.activeTab {
    width: 82px;
    height: 22px;
    background-color: #f5f6f7;
    border-right: 1px solid #d9dadb;
}

.viewTab {
    width: 77px;
}

.manageTab {
    width: 95px;
    border-left: 1px solid #d5e5c8;
    border-right: 1px solid #d5e5c8;
}

.tabTools {
    display: flex;
    align-items: center;
    gap: 11px;
    margin-left: auto;
    padding-right: 4px;
}

.plainButton {
    display: flex;
    align-items: center;
    justify-content: center;
}

.chevron {
    width: 8px;
    height: 8px;
}

.helpButton {
    width: 13px;
    height: 13px;
    border-radius: 50%;
    background-color: #1979ca;
    color: #fff;
    font-size: 10px;
    font-weight: bold;
    line-height: 13px;
}

/* ribbon */
.ribbon {
    display: flex;
    padding: 2px 0;
    background-color: #f5f6f7;
    border-bottom: 1px solid #d9dadb;
    color: #3b3b3b;
    font-size: 10px;
}

.ribbonGroup {
    display: flex;
    flex-direction: column;
    justify-content: space-between;
    height: 76px;
    padding: 0 6px;
    border-right: 1px solid #e2e3e4;
    white-space: nowrap;
}

.placeGroup {
    width: 163px;
}

.networkGroup {
    width: 294px;
}

.systemGroup {
    width: 321px;
}

.ribbonButtons {
    display: flex;
    gap: 8px;
    padding-top: 5px;
}

.bigButton {
    display: flex;
    flex-direction: column;
    align-items: center;
    gap: 4px;
    line-height: 12px;
}

.bigIcon {
    width: 32px;
    height: 26px;
}

.caret {
    display: inline-block;
    width: 5px;
    height: 3px;
    vertical-align: middle;
}

.groupLabel {
    color: #8c8c8c;
    line-height: 14px;
    text-align: center;
}

.smallButtons {
    display: flex;
    flex-direction: column;
    gap: 5px;
}

.smallButton {
    display: flex;
    align-items: center;
    gap: 3px;
    line-height: 14px;
}

/* address row */
.navRow {
    display: flex;
    align-items: center;
    height: 32px;
    padding: 0 11px 0 8px;
}

.navIcon {
    width: 20px;
    height: 20px;
    margin-right: 7px;
}

.historyButton {
    width: 13px;
    margin-right: 10px;
    color: #666;
}

.caretBig {
    width: 8px;
    height: 4px;
}

.upIcon {
    width: 10px;
    height: 12px;
    margin-right: 7px;
}

.addressBar {
    display: flex;
    flex: 1;
    height: 20px;
    border: 1px solid #c6c6c6;
    background: linear-gradient(to right, #83d893 52.3%, #f0f0f0 52.3%);
}

.crumbs {
    display: flex;
    flex: 1;
    align-items: center;
    gap: 7px;
}

.crumbArrow {
    width: 6px;
    height: 8px;
}

.addressButton {
    width: 18px;
}

.stopButton {
    width: 23px;
    border-left: 1px solid #c6c6c6;
}

.searchBox {
    display: flex;
    align-items: center;
    width: 94px;
    height: 20px;
    margin-left: 12px;
    padding: 0 8px;
    border: 1px solid #d5d5d5;
}

.searchInput {
    flex: 1;
    width: 0;
}

.searchInput::placeholder {
    color: #6d6d6d;
    opacity: 1;
}

.searchIcon {
    width: 12px;
    height: 12px;
}

/* body of the window */
.content {
    display: flex;
    flex: 1;
}

.tree {
    width: 140px;
    padding: 8px 1px 0 0;
    border-right: 1px solid #f2f2f2;
    overflow: hidden;
    white-space: nowrap;
}

.tree ul {
    margin-bottom: 18px;
}

.treeHead,
.tree li {
    display: flex;
    align-items: center;
    gap: 5px;
    height: 19px;
    overflow: hidden;
}

.tree li:nth-child(even) {
    height: 18px;
}

.treeHead {
    padding-left: 17px;
}

.tree li {
    padding-left: 27px;
}

.currentHead {
    background-color: #f6f6f6;
    box-shadow: inset 0 0 0 1px #dedede;
}

.files {
    flex: 1;
    padding: 2px 7px 0 9px;
}

.section {
    display: flex;
    align-items: center;
    gap: 6px;
    height: 28px;
    color: #1e3287;
    font-size: 14px;
    line-height: 18px;
}

.lined::after {
    content: "";
    flex: 1;
    height: 1px;
    background-color: #dedede;
}

.openMark {
    width: 6px;
    height: 5px;
}

.tiles {
    display: grid;
    grid-template-columns: repeat(auto-fill, 240px);
    gap: 3px;
    padding-left: 5px;
}

.tile {
    position: relative;
    display: flex;
    align-items: center;
    gap: 5px;
    height: 46px;
    padding: 0 4px;
    border: 1px solid transparent;
}

.selected {
    background-color: #d1e8ff;
    border-color: #66a7e8;
}

.tileCheck {
    position: absolute;
    top: 1px;
    left: 3px;
    width: 12px;
    height: 11px;
    appearance: none;
    background-color: #fff;
    border-right: 1px solid #777;
    border-bottom: 1px solid #777;
}

.tileCheck:checked::after {
    content: "";
    display: block;
    width: 4px;
    height: 8px;
    margin-left: 4px;
    border: solid #000;
    border-width: 0 2px 2px 0;
    transform: rotate(45deg);
}

.tileIcon {
    width: 44px;
    height: 44px;
}

.tileText {
    flex: 1;
    white-space: nowrap;
}

.name,
.info {
    padding-left: 1px;
}

.info {
    color: #6d6d6d;
}

.bar {
    height: 12px;
    margin: 1px 0;
    border: 1px solid #bcbcbc;
    background-color: #e6e6e6;
}

.used {
    height: 100%;
    background-color: #26a0da;
}

.discText {
    fill: #fff;
    font-size: 25px;
    font-weight: 600;
    text-anchor: middle;
}

/* status bar */
.statusBar {
    display: flex;
    align-items: center;
    height: 19px;
    padding: 0 7px 2px 2px;
    color: #1e3246;
}

.statusItem {
    padding: 0 9px 0 10px;
    border-right: 1px solid #ececec;
}

.viewButtons {
    display: flex;
    gap: 8px;
    margin-left: auto;
}

/* taskbar */
.taskbar {
    display: flex;
    align-items: center;
    height: 35px;
    background: linear-gradient(95deg, #65778e 0%, #8191a7 14%, #8594a8 29%, #7489a2 37%, #718fa9 45%, #7390ab 58%, #7e95b0 62%, #8ba0bb 65%, #7fa6c4 66%, #65778e 67%, #65768c 100%);
    color: #fff;
}

.grip {
    width: 2px;
    height: 28px;
    margin-left: 13px;
    background: repeating-linear-gradient(#333d4a 0 1px, transparent 1px 3px);
}

.startButton {
    display: flex;
    align-items: center;
    justify-content: center;
    width: 52px;
    height: 33px;
    margin-right: 7px;
    background-color: rgba(140, 160, 190, 0.35);
}

.orb {
    width: 35px;
    height: 35px;
}

.task {
    display: flex;
    align-items: center;
    justify-content: center;
    width: 53px;
    height: 35px;
    margin-right: 6px;
}

.taskIcon {
    width: 31px;
    height: 27px;
}

.progressTask {
    border: 1px solid #fff;
    background: linear-gradient(to right, #6fe07a 0, #a3dcae 26%, #bcc8d3 28%, #a5b3c3 100%);
    box-shadow: 4px 0 0 -1px #8fa0b4, 5px 0 0 -1px #fff;
}

.openTask {
    border: 1px solid #b9c4d1;
    background-color: rgba(255, 255, 255, 0.2);
    box-shadow: 4px 0 0 -1px #8d9cb0, 5px 0 0 -1px #b9c4d1;
}

.doubleTask {
    box-shadow: 4px 0 0 -1px #8d9cb0, 5px 0 0 -1px #b9c4d1, 8px 0 0 -1px #8d9cb0, 9px 0 0 -1px #b9c4d1;
}

.deviceTask {
    width: 57px;
    margin-left: 2px;
    box-shadow: none;
}

.tray {
    display: flex;
    gap: 7px;
    margin-left: auto;
}

.language {
    margin-left: 15px;
}

.clock {
    width: 72px;
    margin: 0 17px 0 8px;
    line-height: 15px;
    text-align: center;
}
```
